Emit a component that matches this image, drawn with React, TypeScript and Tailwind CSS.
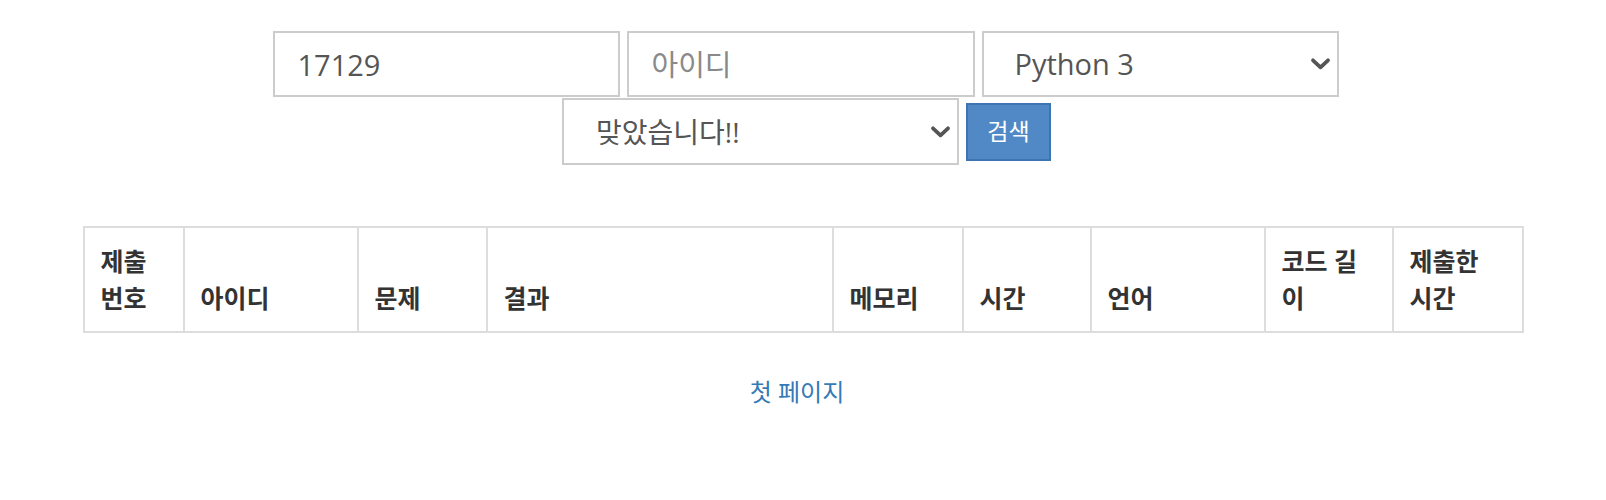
import React from 'react';

const font = { fontFamily: '"Open Sans", "Noto Sans CJK KR", sans-serif' };

const Chevron = () => (
  <svg
    className="pointer-events-none absolute right-[8px] top-1/2 -translate-y-1/2"
    width="21"
    height="13"
    viewBox="0 0 21 13"
    fill="none"
  >
    <path d="M3 2.8 L10.5 9.8 L18 2.8" stroke="#555" strokeWidth="3.8" strokeLinecap="round" strokeLinejoin="round" />
  </svg>
);

const columns = [
  { label: '제출 번호', w: 'w-[100px]' },
  { label: '아이디', w: 'w-[174px]' },
  { label: '문제', w: 'w-[129px]' },
  { label: '결과', w: 'w-[346px]' },
  { label: '메모리', w: 'w-[130px]' },
  { label: '시간', w: 'w-[128px]' },
  { label: '언어', w: 'w-[174px]' },
  { label: '코드 길이', w: 'w-[128px]' },
  { label: '제출한 시간', w: 'w-[130px]' },
];

export default function App() {
  return (
    <div className="w-[1606px] h-[500px] bg-white text-[#333]" style={font}>
      <form className="pt-[31px]" onSubmit={e => e.preventDefault()}>
        <div className="flex justify-center gap-[7px] pl-[5px]">
          <input
            defaultValue="17129"
            className="w-[347px] h-[66px] border-2 border-[#ccc] bg-white pl-[23px] text-[29px] text-[#555] outline-none"
          />
          <input
            placeholder="아이디"
            className="w-[348px] h-[66px] border-2 border-[#ccc] bg-white pl-[23px] text-[29px] text-[#555] outline-none placeholder:text-[#8a8a8a]"
          />
          <div className="relative">
            <select
              defaultValue="py3"
              className="w-[357px] h-[66px] appearance-none border-2 border-[#ccc] bg-white pl-[31px] text-[29px] text-[#555] outline-none"
            >
              <option value="py3">Python 3</option>
            </select>
            <Chevron />
          </div>
        </div>
        <div className="flex justify-center items-center gap-[7px] mt-[1px] pl-[7px]">
          <div className="relative">
            <select
              defaultValue="ac"
              className="w-[397px] h-[67px] appearance-none border-2 border-[#ccc] bg-white pl-[32px] text-[28px] text-[#555] outline-none"
            >
              <option value="ac">맞았습니다!!</option>
            </select>
            <Chevron />
          </div>
          <button
            type="submit"
            className="w-[85px] h-[58px] border-2 border-[#3f74b3] bg-[#5189c7] text-[23px] text-white"
          >
            검색
          </button>
        </div>
      </form>

      <table className="mx-auto mt-[61px] w-[1439px] table-fixed border-collapse">
        <thead>
          <tr>
            {columns.map(c => (
              <th
                key={c.label}
                className={`${c.w} border-2 border-[#ddd] px-[16px] pt-[15px] pb-[14px] text-left align-bottom text-[25px] font-bold leading-[37px]`}
              >
                {c.label}
              </th>
            ))}
          </tr>
        </thead>
        <tbody />
      </table>

      <div className="mt-[41px] flex justify-center pr-[12px]">
        <a href="#" className="text-[24px] text-[#337ab7]">
          첫 페이지
        </a>
      </div>
    </div>
  );
}
